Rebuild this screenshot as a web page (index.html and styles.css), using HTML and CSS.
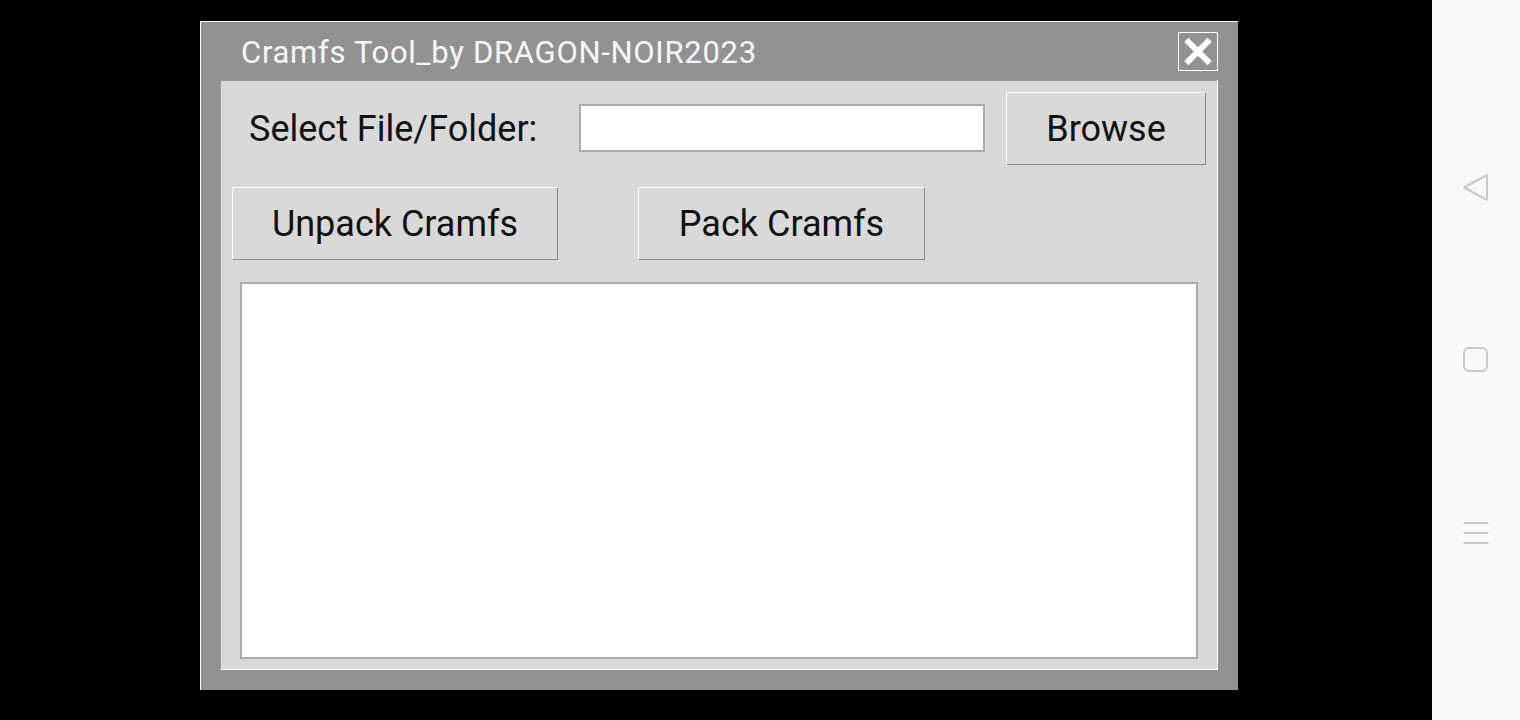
FILE: index.html
```html
<!DOCTYPE html>
<html>
<head>
<meta charset="utf-8">
<title>Cramfs Tool</title>
<link rel="stylesheet" href="styles.css">
</head>
<body>
<div class="screen">
  <div class="window">
    <div class="titlebar">
      <span class="title">Cramfs Tool_by DRAGON-NOIR2023</span>
      <button class="close" aria-label="Close">
        <svg width="40" height="39" viewBox="0 0 40 39">
          <line x1="10.5" y1="10" x2="29.5" y2="29" stroke="#fff" stroke-width="6" stroke-linecap="square"/>
          <line x1="29.5" y1="10" x2="10.5" y2="29" stroke="#fff" stroke-width="6" stroke-linecap="square"/>
        </svg>
      </button>
    </div>
    <div class="panel">
      <div class="row1">
        <label class="label">Select File/Folder:</label>
        <div class="entry"></div>
        <button class="btn browse">Browse</button>
      </div>
      <div class="row2">
        <button class="btn unpack">Unpack Cramfs</button>
        <button class="btn pack">Pack Cramfs</button>
      </div>
      <div class="output"></div>
    </div>
  </div>
</div>
<nav class="nav">
  <svg class="ico back" width="28" height="30" viewBox="0 0 28 30">
    <path d="M25 2 L25 27 L2 14.5 Z" fill="none" stroke="#c9c9c9" stroke-width="2" stroke-linejoin="round"/>
  </svg>
  <svg class="ico home" width="28" height="28" viewBox="0 0 28 28">
    <rect x="2" y="2" width="23" height="23" rx="5" fill="none" stroke="#c9c9c9" stroke-width="2"/>
  </svg>
  <svg class="ico menu" width="28" height="26" viewBox="0 0 28 26">
    <line x1="1.5" y1="3" x2="26.5" y2="3" stroke="#c9c9c9" stroke-width="2"/>
    <line x1="1.5" y1="13" x2="26.5" y2="13" stroke="#c9c9c9" stroke-width="2"/>
    <line x1="1.5" y1="23" x2="26.5" y2="23" stroke="#c9c9c9" stroke-width="2"/>
  </svg>
</nav>
</body>
</html>
```
FILE: styles.css
```css
html, body {
  margin: 0;
  padding: 0;
}
body {
  width: 1520px;
  height: 720px;
  background: #000;
  display: flex;
  overflow: hidden;
  font-family: Roboto, "Liberation Sans", sans-serif;
}
.screen {
  width: 1432px;
  height: 720px;
  box-sizing: border-box;
  padding: 21px 0 0 200px;
  background: #000;
}
.window {
  width: 1038px;
  height: 669px;
  box-sizing: border-box;
  background: #929292;
  border-left: 1px solid #ffffff;
  border-top: 1px solid #ffffff;
  padding: 0 20px 20px 19px;
  display: flex;
  flex-direction: column;
}
.titlebar {
  height: 58px;
  display: flex;
  align-items: center;
  justify-content: space-between;
}
.title {
  color: #f7f7f7;
  font-size: 31px;
  letter-spacing: 0.7px;
  padding-left: 21px;
  margin-top: 2px;
}
.close {
  width: 40px;
  height: 39px;
  box-sizing: border-box;
  border: 1.5px solid #ffffff;
  background: transparent;
  padding: 0;
  margin: 0;
  display: flex;
  align-items: center;
  justify-content: center;
}
.close svg {
  display: block;
  flex: none;
}
.panel {
  flex: 1;
  background: #d9d9d9;
  border-left: 1px solid #9a9a9a;
  border-top: 1px solid #9a9a9a;
  border-right: 1px solid #ffffff;
  border-bottom: 1px solid #ffffff;
  display: flex;
  flex-direction: column;
}
.row1 {
  display: flex;
  align-items: center;
  height: 73px;
  margin-top: 11px;
  padding-left: 28px;
}
.label {
  width: 330px;
  font-size: 36px;
  color: #111;
}
.entry {
  width: 406px;
  height: 48px;
  box-sizing: border-box;
  background: #fff;
  border: 2px solid #ababab;
  margin-top: -1px;
}
.btn {
  box-sizing: border-box;
  height: 73px;
  background: #d9d9d9;
  border: 1px solid;
  border-color: #ffffff #8c8c8c #8c8c8c #ffffff;
  font-family: Roboto, "Liberation Sans", sans-serif;
  font-size: 36px;
  color: #111;
  padding: 0;
}
.browse {
  width: 200px;
  margin-left: 21px;
}
.row2 {
  display: flex;
  margin-top: 22px;
  padding-left: 11px;
}
.unpack {
  width: 326px;
}
.pack {
  width: 287px;
  margin-left: 80px;
}
.output {
  width: 958px;
  height: 377px;
  box-sizing: border-box;
  margin: 22px 0 0 19px;
  background: #fff;
  border: 2px solid #ababab;
}
.nav {
  width: 88px;
  height: 720px;
  background: #f8f8f8;
  display: flex;
  flex-direction: column;
  align-items: center;
}
.ico {
  display: block;
}
.back {
  margin-top: 173px;
  margin-left: -1px;
}
.home {
  margin-top: 143px;
}
.menu {
  margin-top: 146px;
}
```
